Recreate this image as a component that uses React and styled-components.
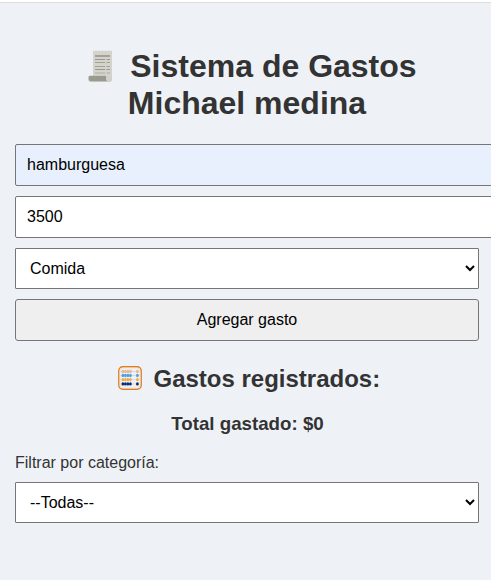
import React, { useState } from "react";
import styled, { createGlobalStyle, css } from "styled-components";

const GlobalStyle = createGlobalStyle`
  body {
    margin: 0;
    background: #eef2f7;
    color: #333;
    font-family: "Liberation Sans", Arial, sans-serif;
    font-size: 16px;
    overflow: hidden;
  }
`;

const TopEdge = styled.div`
  height: 2px;
  background: #fff;
  border-bottom: 1px solid #dfe0dc;
`;

const Page = styled.main`
  display: flex;
  flex-direction: column;
  width: 464px;
  padding: 45px 12px 0 15px;
`;

const Title = styled.h1`
  margin: 0 0 22px;
  font-size: 32px;
  line-height: 37px;
  text-align: center;
`;

const Form = styled.form`
  display: flex;
  flex-direction: column;
  align-items: flex-start;
  gap: 10px;
`;

const control = css`
  box-sizing: border-box;
  width: 100%;
  margin: 0;
  padding: 10px;
  border: 1px solid #767676;
  border-radius: 2px;
  font-family: inherit;
  font-size: 16px;
  color: #000;
  outline: none;
`;

const Field = styled.input`
  ${control}
  width: 486px;
  height: 42px;
  padding-left: 11px;
  background: ${(p) => (p.$autofilled ? "#e8f0fe" : "#fff")};
`;

const Select = styled.select`
  ${control}
  height: 41px;
  border-radius: 1px;
  background: #fff;
`;

const Button = styled.button`
  ${control}
  height: 42px;
  border-radius: 3px;
  background: #efefef;
`;

const Subtitle = styled.h2`
  margin: 24px 0 0;
  font-size: 24px;
  line-height: 28px;
  text-align: center;
`;

const Total = styled.h3`
  margin: 20px 0 0;
  padding-left: 1px;
  font-size: 18.72px;
  line-height: 21px;
  text-align: center;
`;

const Label = styled.label`
  margin: 20px 0 10px;
  line-height: 18px;
`;

const ReceiptSvg = styled.svg`
  width: 24px;
  height: 32px;
  margin: 0 9px 0 11px;
  vertical-align: -5px;
`;

const AbacusSvg = styled.svg`
  width: 24px;
  height: 24px;
  margin: 0 5px 0 4px;
  vertical-align: -3px;
`;

function Receipt() {
  return (
    <ReceiptSvg viewBox="0 0 24 32" aria-hidden="true">
      <path
        d="M5 0.3 L6.5 1.3 L8 .3 L9.7 1.3 L11.3 .3 L13 1.3 L14.6 .3 L16.2 1.3 L17.8 .3 L19.4 1.3 L21 .3 L22.4 1.3 L24 .3 V29 Q24 32 21 32 H5Z"
        fill="#d3d3d0"
      />
      <path d="M18 26 V29 Q18 32 21 32 Q24 32 24 29 V26Z" fill="#d0d0cd" />
      <path d="M0 28 Q0 25.5 2 25.5 H18 V29 Q18 32 21 32 H3 Q0 32 0 28Z" fill="#c3c3bd" />
      <path d="M1 26 H18 V29 Q18 30.4 19 31 H2.5 Q1 31 1 28.5Z" fill="#999b8e" />
      <path d="M7 6H22" stroke="#aaa08d" strokeWidth="2" />
      <path d="M7 12.5H17M18.5 12.5H22M7 16.5H17M18.5 16.5H22" stroke="#aa9f8b" />
      <path d="M7 9.5H17M18.5 9.5H22M7 19.5H17M18.5 19.5H22" stroke="#96978f" />
      <path d="M7 23H17M18.5 23H22" stroke="#c4b9a9" strokeWidth="1.5" />
    </ReceiptSvg>
  );
}

const beadRows = [
  { y: 5.5, color: "#e7b994" },
  { y: 9.5, color: "#4ba1ed" },
  { y: 13.6, color: "#f5ad3c" },
  { y: 17.9, color: "#082b80" },
];

function Abacus() {
  return (
    <AbacusSvg viewBox="0 0 24 24" aria-hidden="true">
      <rect x=".8" y=".8" width="22.4" height="22.4" rx="4" fill="#eef1f3" stroke="#df7d25" strokeWidth="1.4" />
      <rect x="2" y="2" width="20" height="20" rx="3" fill="none" stroke="#f8dfb9" strokeWidth=".7" />
      {beadRows.map(({ y, color }) => (
        <g key={y} fill={color}>
          <path d={`M2.5 ${y}H21.5`} stroke="#cfd2d5" strokeWidth=".7" />
          {[4.9, 7.4, 9.9, 12.4, 19.4].map((x) => (
            <ellipse key={x} cx={x} cy={y} rx="1.4" ry="1.65" />
          ))}
        </g>
      ))}
    </AbacusSvg>
  );
}

export default function App() {
  const [name, setName] = useState("hamburguesa");
  const [amount, setAmount] = useState("3500");

  return (
    <>
      <GlobalStyle />
      <TopEdge />
      <Page>
        <Title>
          <Receipt /> Sistema de Gastos Michael medina
        </Title>
        <Form onSubmit={(e) => e.preventDefault()}>
          <Field $autofilled value={name} onChange={(e) => setName(e.target.value)} />
          <Field inputMode="numeric" value={amount} onChange={(e) => setAmount(e.target.value)} />
          <Select defaultValue="comida">
            <option value="comida">Comida</option>
          </Select>
          <Button type="submit">Agregar gasto</Button>
        </Form>
        <Subtitle>
          <Abacus /> Gastos registrados:
        </Subtitle>
        <Total>Total gastado: $0</Total>
        <Label htmlFor="filtro">Filtrar por categoría:</Label>
        <Select id="filtro" defaultValue="todas">
          <option value="todas">--Todas--</option>
        </Select>
      </Page>
    </>
  );
}
